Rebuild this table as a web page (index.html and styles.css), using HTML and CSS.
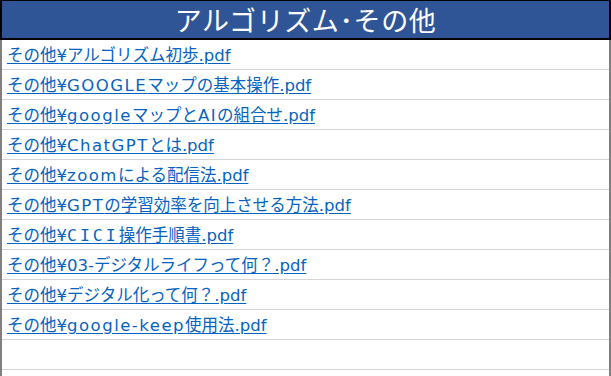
FILE: index.html
```html
<!DOCTYPE html>
<html lang="ja">
<head>
<meta charset="utf-8">
<link rel="stylesheet" href="styles.css">
</head>
<body>
<div class="sheet">
  <div class="title">アルゴリズム･その他</div>
  <ul class="list">
    <li class="row"><a href="#">その他¥アルゴリズム初歩.pdf</a></li>
    <li class="row"><a href="#">その他¥<span class="en">GOOGLE</span>マップの基本操作.pdf</a></li>
    <li class="row"><a href="#">その他¥<span class="en">google</span>マップと<span class="en">AI</span>の組合せ.pdf</a></li>
    <li class="row"><a href="#">その他¥<span class="en">ChatGPT</span>とは.pdf</a></li>
    <li class="row"><a href="#">その他¥<span class="en">zoom</span>による配信法.pdf</a></li>
    <li class="row"><a href="#">その他¥<span class="en">GPT</span>の学習効率を向上させる方法.pdf</a></li>
    <li class="row"><a href="#">その他¥<span class="en en-wide">CICI</span>操作手順書.pdf</a></li>
    <li class="row"><a href="#">その他¥03-デジタルライフって何？.pdf</a></li>
    <li class="row"><a href="#">その他¥デジタル化って何？.pdf</a></li>
    <li class="row"><a href="#">その他¥<span class="en">google-keep</span>使用法.pdf</a></li>
    <li class="row"></li>
    <li class="row"></li>
  </ul>
</div>
</body>
</html>
```
FILE: styles.css
```css
html, body {
  margin: 0;
  padding: 0;
  background: #ffffff;
}
.sheet {
  width: 611px;
  height: 376px;
  overflow: hidden;
  box-sizing: border-box;
  font-family: "Noto Sans CJK JP", "Noto Sans", sans-serif;
}
.title {
  height: 37px;
  box-sizing: content-box;
  border-top: 1px solid #000;
  border-bottom: 2px solid #000;
  border-left: 2px solid #000;
  border-right: 2px solid #000;
  background: #2f5597;
  color: #ffffff;
  font-size: 27px;
  letter-spacing: 0.6px;
  line-height: 38px;
  text-align: center;
  width: 607px;
}
.list {
  list-style: none;
  margin: 0;
  padding: 0;
  border-left: 2px solid #808080;
  border-right: 2px solid #808080;
  width: 607px;
}
.row {
  height: 29px;
  border-bottom: 1px solid #d4d4d4;
  padding-left: 5px;
  font-family: "DejaVu Sans", "Noto Sans CJK JP", sans-serif;
  font-size: 16.5px;
  line-height: 31px;
}
.row a {
  color: #0563c1;
  text-decoration: underline;
  text-underline-offset: 2px;
}
.en {
  letter-spacing: 1.5px;
}
.en-wide {
  font-family: "DejaVu Sans Mono", "DejaVu Sans", monospace;
  letter-spacing: 3px;
}
```
